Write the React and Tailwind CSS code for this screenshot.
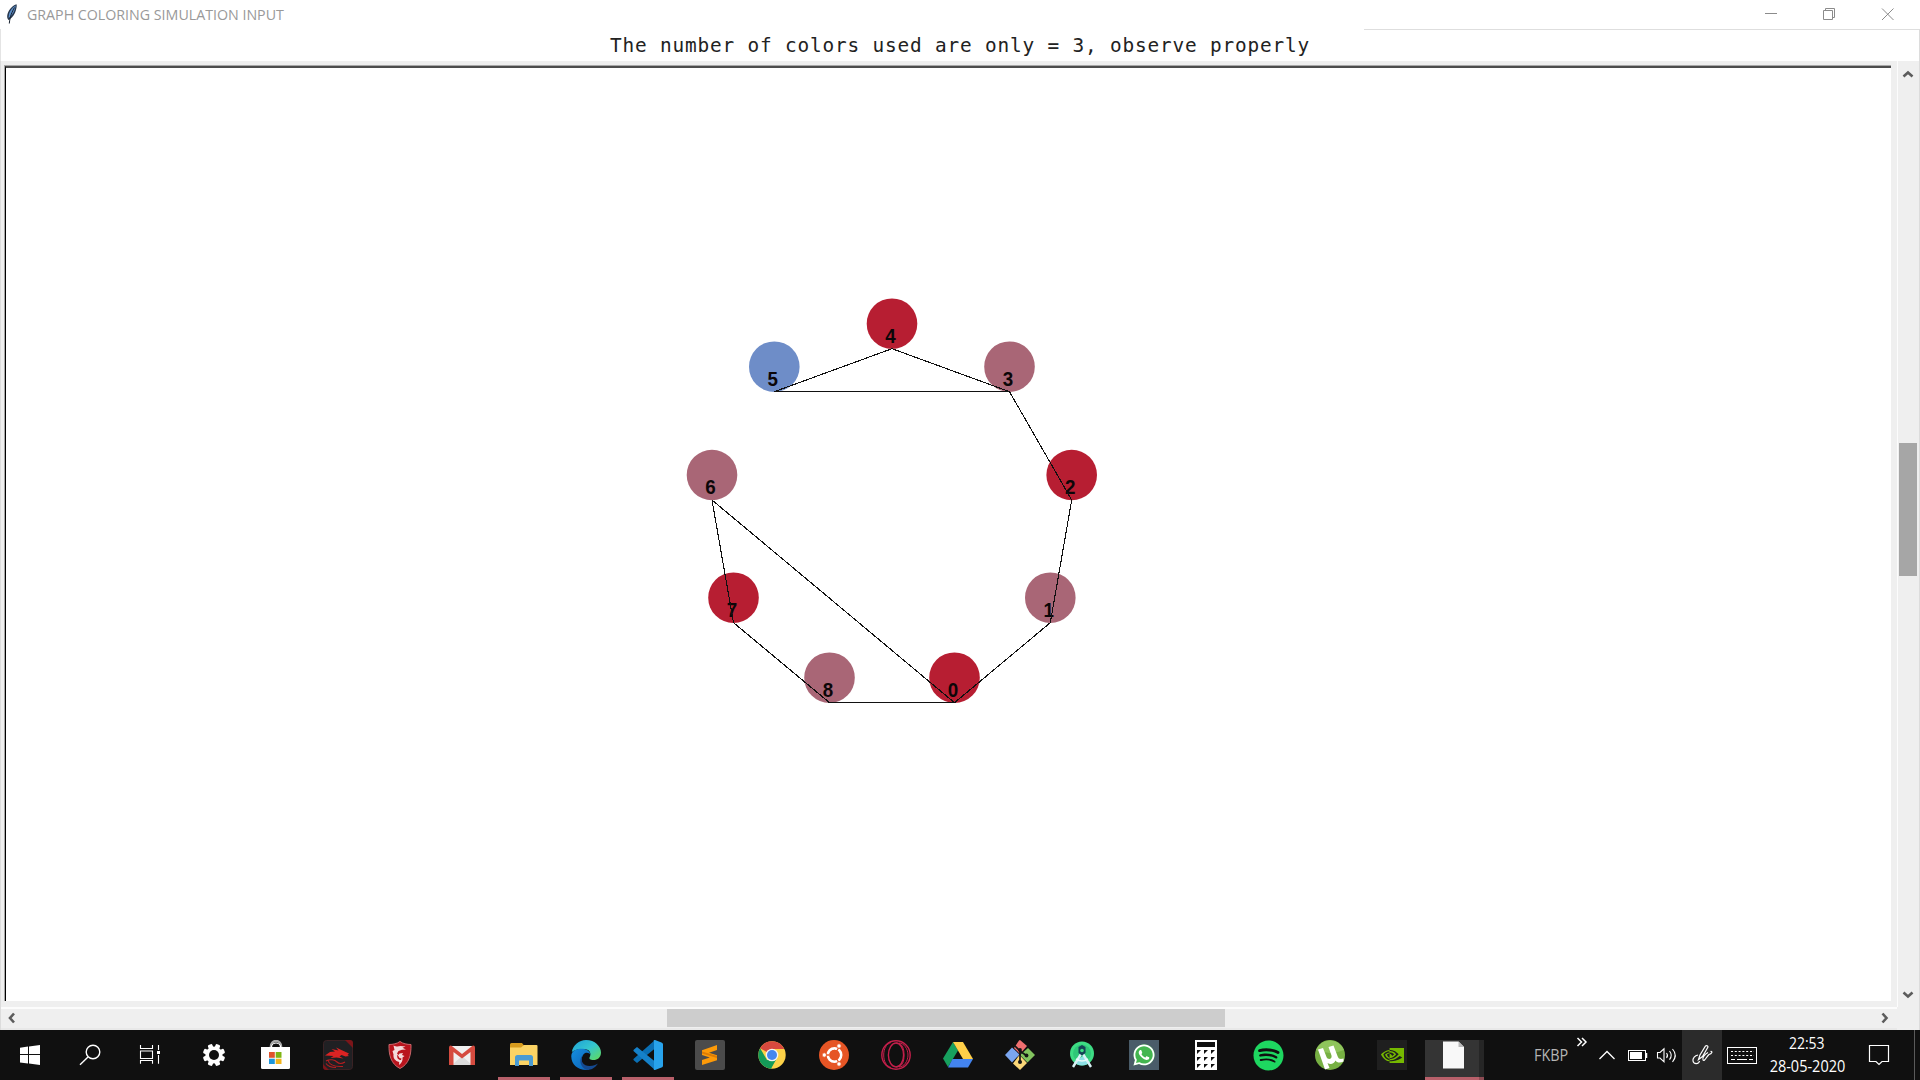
import React from "react";
import { FaSpotify, FaWhatsapp } from "react-icons/fa";
import { SiNvidia } from "react-icons/si";

const RED = "#b71e32";
const MAUVE = "#a96676";
const BLUE = "#6e8dc8";

const nodes = [
  { id: 0, x: 954.5, y: 677.7, fill: RED },
  { id: 1, x: 1050.3, y: 597.7, fill: MAUVE },
  { id: 2, x: 1071.7, y: 475, fill: RED },
  { id: 3, x: 1009.5, y: 366.7, fill: MAUVE },
  { id: 4, x: 892, y: 323.7, fill: RED },
  { id: 5, x: 774.3, y: 366.7, fill: BLUE },
  { id: 6, x: 712, y: 475, fill: MAUVE },
  { id: 7, x: 733.5, y: 597.7, fill: RED },
  { id: 8, x: 829.5, y: 677.7, fill: MAUVE },
];

const edges = [
  [0, 1], [1, 2], [2, 3], [3, 4], [4, 5], [5, 3], [6, 7], [7, 8], [8, 0], [6, 0],
];

function Graph() {
  return (
    <svg className="block h-full w-full" viewBox="6 68 1885 933">
      {nodes.map((n) => (
        <circle key={n.id} cx={n.x} cy={n.y} r="25.3" fill={n.fill} />
      ))}
      {nodes.map((n) => (
        <text key={n.id} transform={`translate(${n.x - 1.5} ${n.y + 18.8}) scale(0.94 1)`} textAnchor="middle" fill="#0c0608"
          className="font-['Liberation_Sans',Arial,sans-serif] text-[20px] font-bold">{n.id}</text>
      ))}
      {edges.map(([a, b]) => (
        <line key={`${a}-${b}`} x1={nodes[a].x} y1={nodes[a].y + 25} x2={nodes[b].x} y2={nodes[b].y + 25}
          stroke="#111" strokeWidth="1.1" shapeRendering="crispEdges" />
      ))}
    </svg>
  );
}

function Chevron({ d }) {
  return (
    <svg className="block h-[12px] w-[12px]" viewBox="0 0 12 12" fill="none" stroke="#5c5c5c" strokeWidth="2.6">
      <path d={d} />
    </svg>
  );
}

function Icon({ children }) {
  return <svg className="block h-[30px] w-[30px] shrink-0" viewBox="0 0 30 30" fill="none">{children}</svg>;
}

const Windows = () => (
  <Icon>
    <path fill="#fff" d="M5 7.8 13 6.6V14H5zM14 6.4 25 5V14H14zM5 15h8v8.4L5 22.4zM14 15h11v10l-11-1.5z" />
  </Icon>
);
const Search = () => (
  <Icon>
    <circle cx="18" cy="12" r="6.8" stroke="#fff" strokeWidth="1.4" />
    <path d="M13 17 5 24.7" stroke="#fff" strokeWidth="1.4" />
  </Icon>
);
const TaskView = () => (
  <Icon>
    <path d="M5.5 5v3.5h12V5M5.500 23.800v-3.300h12v3.300M5.500 11h12v7.500h-12zM23.500 5v5M23.500 15v8.800" stroke="#fff" strokeWidth="1.100" />
    <rect x="22" y="11" width="3" height="3" fill="#fff" />
  </Icon>
);
const Settings = () => (
  <Icon>
    {[0, 45, 90, 135].map((a) => (
      <rect key={a} x="12.600" y="3.800" width="4.800" height="22.400" rx="1.300" fill="#fff" transform={`rotate(${a + 22.5} 15 15)`} />
    ))}
    <circle cx="15" cy="15" r="8.600" fill="#fff" />
    <circle cx="15" cy="15" r="5" fill="#101010" />
  </Icon>
);
const Store = () => (
  <Icon>
    <path d="M10 8V6.500a5 5.500 0 0 1 10 0V8" stroke="#aaa" strokeWidth="2.600" />
    <path d="M10.500 8V5.800a5 5 0 0 1 9 0V8" stroke="#fff" strokeWidth="1" />
    <path d="M0 7h29v20.500a1.500 1.500 0 0 1-1.500 1.500h-26A1.500 1.500 0 0 1 0 27.500z" fill="#fff" />
    <path d="M8 12h5.800v5.800H8z" fill="#e0532c" />
    <path d="M14.700 12h5.800v5.800h-5.800z" fill="#7fb514" />
    <path d="M8 18.700h5.800V24H8z" fill="#1c96dc" />
    <path d="M14.700 18.700h5.800V24h-5.800z" fill="#f2b51d" />
  </Icon>
);
const Dragon = () => (
  <Icon>
    <rect x=".5" y=".5" width="29" height="29" rx="3" fill="#202023" stroke="#3a2224" />
    <path d="M22 0h5a3 3 0 0 1 3 3v5zM0 24v3a3 3 0 0 0 3 3h3z" fill="#7c1519" />
    <path d="M2 15.500 7 12l5-.5L8.500 9l7 1.500L13 7.500l6.500 3 6.500 3-1.500 1.500 1.500 1-3.500.5-4-1.500-2 1.500 4 2-7-1-6 .5 3-2z" fill="#db2323" />
    <path d="M3 21c4-2.500 9-1 11 1s4 2.500 8 0M5 20c1 5 6 7 15 6.500M3 23.500c2 3 6 4 10 4" stroke="#b81d20" strokeWidth="1.100" />
  </Icon>
);
const Shield = () => (
  <Icon>
    <path d="M15 1.500c3 2.200 7 3 11 3C26.300 15 24 24 15 28.500 6 24 3.700 15 4 4.500c4 0 8-.8 11-3z" fill="#b9141d" stroke="#c9686c" strokeWidth="1" />
    <path d="M8.500 5.500c3 1.500 5 1 7 .5l5 .5-3 1.200 3.500 1.800-4 .2-3.500 1.300-1.500 2.500 1.500 1.500 1-1.500 3.500-.5-1 2 2.500 1-2 1.500c.5 3-1 5.500-3.500 7.500l.2-3c-4.200-1-6.200-4-5.700-7.500L7.500 11l2-1z" fill="#f3dadb" />
    <path d="M12.500 14.500c-1 3 .5 5.500 3.500 5.500l.5-1.500-2-.5z" fill="#b9141d" />
  </Icon>
);
const Gmail = () => (
  <Icon>
    <path d="M5 6h20v19H5z" fill="#f0f0f0" />
    <path d="m15 16 10 9H5z" fill="#dcdcdc" />
    <path d="M2 25V7.500a2 2 0 0 1 2.500-1.800L15 14l10.500-8.300A2 2 0 0 1 28 7.500V25h-4.500V12L15 18.500 6.500 12v13z" fill="#d54b3f" />
  </Icon>
);
const Explorer = () => (
  <Icon>
    <path d="M1 4.500A1.500 1.500 0 0 1 2.500 3H13l2 2.500V10H1z" fill="#d79b1d" />
    <path d="M1 7.500h11L15 5h12.500a1 1 0 0 1 1 1v19h-27.500z" fill="#fbd364" />
    <path d="M6 26V17.500A2.500 2.500 0 0 1 8.500 15h13a2.500 2.500 0 0 1 2.500 2.500V26h-4v-5.500H10V26z" fill="#4a9bd3" />
  </Icon>
);
const Edge = () => (
  <Icon>
    <defs>
      <linearGradient id="edgeTop" x1="0" y1="0" x2="1" y2="1">
        <stop offset="0" stopColor="#1e9fd8" /><stop offset=".5" stopColor="#34c6cf" /><stop offset="1" stopColor="#63dc56" />
      </linearGradient>
      <linearGradient id="edgeLow" x1="0" y1="0" x2="1" y2="1">
        <stop offset="0" stopColor="#1590e0" /><stop offset="1" stopColor="#0c5fb4" />
      </linearGradient>
    </defs>
    <path d="M.8 12C2 5 8 0 15 0c9 0 15 6.500 15 12.500 0 5-3.500 7.500-7.500 7.500-3.500 0-4.500-1.200-4-2.500 2-3 1-8-5-8.500C7 8.500 3 10 .8 12z" fill="url(#edgeTop)" />
    <path d="M.3 16C.5 11 5 8.700 10.500 8.700c5 0 9 2.500 9 6.500 0-2-5-4-7.500-.2-3 5-1 12 6 14.700C8 31 0 25 .3 16z" fill="url(#edgeLow)" />
    <path d="M11.500 15.500c-2.500 6 1 10.500 7 10.500 4 0 6-1.300 8.500-2.500C24 28 20 30 16 30 8.500 27 8 19 11.500 15.500z" fill="#154a91" />
  </Icon>
);
const Code = () => (
  <Icon>
    <path d="M22 0v8.500L4 23 1 20.500a1.300 1.300 0 0 1 0-2z" fill="#0a6fb4" />
    <path d="M4 7 22 21.500V30L1 11.500a1.300 1.300 0 0 1 0-2z" fill="#1581c9" />
    <path d="m22 0 6.500 2.500A2 2 0 0 1 30 4.500v21a2 2 0 0 1-1.500 2L22 30c-1 0-2-1-1-1.500V1.500C20 1 21 0 22 0z" fill="#28a3ec" />
  </Icon>
);
const Sublime = () => (
  <Icon>
    <rect width="30" height="30" rx="2" fill="#4b4b4b" />
    <path d="M7 10.200 22 5v5l-8 2.800 8 2.400v5L7 25v-5l7.800-2.600L7 15z" fill="#fd9a08" />
    <path d="m7 11.500 15 4.500v2L7 13.500z" fill="#dd7c04" />
  </Icon>
);
const Chrome = () => (
  <Icon>
    <circle cx="15" cy="15" r="13.700" fill="#fdd248" />
    <path d="M15 15 3.100 8.200A13.700 13.700 0 0 1 26.900 8.200L27 9H15z" fill="#d8493e" />
    <path d="M3.100 8.200 10 20l5 1-1 7.700A13.700 13.700 0 0 1 3.100 8.200z" fill="#149b58" />
    <path d="M14 28.700 20 18l-6 3-4-1z" fill="#149b58" />
    <circle cx="15" cy="15" r="6.300" fill="#f4f4f4" />
    <circle cx="15" cy="15" r="5" fill="#4687ee" />
  </Icon>
);
const Ubuntu = () => (
  <Icon>
    <circle cx="15" cy="15" r="15" fill="#e65525" />
    <circle cx="15.500" cy="15" r="6.600" stroke="#fff" strokeWidth="2.800" />
    <g stroke="#e65525" strokeWidth="1.300">
      <path d="M1 15h9M15.500 15l6.500 11.500M15.500 15 22 3.500" />
    </g>
    <circle cx="15.500" cy="15" r="5.200" fill="#e65525" />
    {[[5.300, 15], [20, 6], [20, 24]].map(([x, y]) => (
      <circle key={y} cx={x} cy={y} r="2.200" fill="#fff" stroke="#e65525" strokeWidth=".8" />
    ))}
  </Icon>
);
const Opera = () => (
  <Icon>
    <g stroke="#c51f4b">
      <circle cx="15" cy="15" r="14.200" strokeWidth="1.400" />
      <ellipse cx="15" cy="15" rx="7.600" ry="12" strokeWidth="1.400" />
      <path d="M10 2.500C5 4 2.700 9 2.700 15S5 26 10 27.500M15 3c7 0 8 6 8 12s-1 12-8 12M18 3c5 0 9 6 9 12s-4 12-9 12" strokeWidth="1" />
    </g>
  </Icon>
);
const Drive = () => (
  <Icon>
    <path d="M10 2 15 10.500 5 27 0 18.500z" fill="#17a05e" />
    <path d="M10 2h10l10 17H20z" fill="#ffcf48" />
    <path d="M9.500 19H30l-5 8.500H5z" fill="#4384f0" />
  </Icon>
);
const Git = () => (
  <Icon>
    <path d="m14 0.500 1-.5 7 6-7 8-6-6z" fill="#ef6f6f" />
    <path d="m7 7.500 7.500 7L7 22.500 0 15z" fill="#7ba6f0" />
    <path d="m23 8 7 7-7.500 7.500L15 15z" fill="#82c35e" />
    <path d="m14.500 15 7.500 8-7 7-7-6.500z" fill="#fbd778" />
    <path d="M9 5l6 6v12M15 11l7 5" stroke="#151515" strokeWidth="1.700" />
    <circle cx="15" cy="22" r="2" fill="#151515" />
    <circle cx="21.500" cy="15.500" r="1.900" fill="#151515" />
    <circle cx="15" cy="10" r="1.900" fill="#151515" />
  </Icon>
);
const AndroidStudio = () => (
  <Icon>
    <circle cx="15" cy="13.500" r="12" fill="#3ddc84" />
    <circle cx="15" cy="13.500" r="9" fill="#2fc778" />
    <path d="M7 22a11 11 0 0 0 16 0l-7-6z" fill="#8de0e6" />
    <path d="M14 14 6 27M16 14l8 13" stroke="#d9f1f5" strokeWidth="2.400" />
    <path d="M9 19q6 4 12 0" stroke="#e8fafa" strokeWidth="1.600" />
    <path d="m15 5 3.500 2v6L15 15.500 11.500 13V7z" fill="#154356" />
    <circle cx="15" cy="10.500" r="1.800" fill="#3ddc84" />
  </Icon>
);
const WhatsApp = () => (
  <div className="relative flex h-[30px] w-[30px] items-center justify-center bg-[#4a5c69]">
    <Icon>
      <path d="M4.500 25.500 6 20a10.500 10.500 0 1 1 4 4z" fill="#43b64f" />
    </Icon>
    <FaWhatsapp className="absolute left-[3px] top-[3px] h-[24px] w-[24px] text-white" />
  </div>
);
const Calculator = () => (
  <Icon>
    <rect x="4" width="22" height="30" fill="#fff" />
    <rect x="6" y="2" width="18" height="5" fill="#101010" />
    {[10, 17, 24].map((y) => [6, 13, 20].map((x) => (
      <path key={`${x}-${y}`} d={`M${x} ${y}h4l-4 4z`} fill="#101010" />
    )))}
  </Icon>
);
const Spotify = () => <FaSpotify className="h-[31px] w-[31px] text-[#1ed760]" />;
const Torrent = () => (
  <Icon>
    <circle cx="15" cy="15" r="15" fill="#77b043" />
    <path d="M1 10A15 15 0 0 1 29 10Q16 16 1 10z" fill="#8fc45c" />
    <path d="M3 9.500 8 8l3.500 9c1.500 3.500 6 2 5-1.500l-3-8.500 5-1.500 4.200 11c.8 2.500 2.800 3 5.800 2v3c-3 1.500-6.500 1.500-8-1-1.500 3.500-5 4.500-8 2.500l2 5-4.500 1.500z" fill="#fff" />
  </Icon>
);
const Nvidia = () => (
  <div className="flex h-[30px] w-[30px] items-center justify-center bg-[#1f1f1f]">
    <SiNvidia className="h-[23px] w-[23px] text-[#76b900]" />
  </div>
);
const Document = () => (
  <Icon>
    <path d="M5 1.500h15.500L26 7v21.500H5z" fill="#f8f8f8" />
    <path d="M20.500 1.500 26 7h-5.500z" fill="#b9b9b9" />
  </Icon>
);

const apps = [
  { name: "Settings", Glyph: Settings },
  { name: "Store", Glyph: Store },
  { name: "Dragon Center", Glyph: Dragon },
  { name: "Shield", Glyph: Shield },
  { name: "Gmail", Glyph: Gmail },
  { name: "Explorer", Glyph: Explorer, open: true },
  { name: "Edge", Glyph: Edge, open: true },
  { name: "Code", Glyph: Code, open: true },
  { name: "Sublime", Glyph: Sublime },
  { name: "Chrome", Glyph: Chrome },
  { name: "Ubuntu", Glyph: Ubuntu },
  { name: "Opera", Glyph: Opera },
  { name: "Drive", Glyph: Drive },
  { name: "Git", Glyph: Git },
  { name: "Android Studio", Glyph: AndroidStudio },
  { name: "WhatsApp", Glyph: WhatsApp },
  { name: "Calculator", Glyph: Calculator },
  { name: "Spotify", Glyph: Spotify },
  { name: "Torrent", Glyph: Torrent },
  { name: "Nvidia", Glyph: Nvidia },
];

function TitleBar() {
  return (
    <header className="flex h-[29px] items-start bg-white pl-[6px]">
      <svg className="mt-[4px] h-[20px] w-[12px] shrink-0" viewBox="0 0 12 20">
        <path d="M10.500.3C7 1.500 3 5 1.500 10c-.6 2.500-.5 4 .8 6l1.200-.5C7 13 9 10 10 6c.5-2.200 1-4 .5-5.700z" fill="#26364c" />
        <path d="M9.800 1.500C6.500 3 4 6.500 3 10l-.5 4C6.500 12 9 6 9.800 1.500z" fill="#5d8fc9" />
        <path d="M8.500 3.500C6 8 4 12 3.300 19.500" stroke="#15202e" strokeWidth="1" fill="none" />
      </svg>
      <h1 className="ml-[9px] origin-left scale-x-[0.948] whitespace-nowrap font-['Open_Sans','Noto_Sans',sans-serif] text-[15px] leading-[28px] text-[#999]">
        GRAPH COLORING SIMULATION INPUT
      </h1>
      <svg className="ml-auto h-[29px] w-[160px] shrink-0" viewBox="1760 0 160 29" fill="none" stroke="#8b8b8b">
        <path d="M1765 13.500h12" />
        <path d="M1823.500 10.500h9v9h-9zM1825.500 10.500v-2h9v9h-2" />
        <path d="m1882 8.500 11.500 11.500M1893.500 8.500 1882 20" />
      </svg>
    </header>
  );
}

function Taskbar() {
  return (
    <footer className="flex h-[50px] bg-[#101010] font-['Open_Sans','Noto_Sans',sans-serif] text-white">
      {[Windows, Search, TaskView].map((Glyph, i) => (
        <div key={i} className="flex w-[60px] items-center justify-center"><Glyph /></div>
      ))}
      <div className="ml-[3px] flex">
        {apps.map(({ name, Glyph, open }) => (
          <div key={name} className="flex w-[62px] flex-col items-center pt-[10px]">
            <div className="flex h-[30px] items-center"><Glyph /></div>
            {open && <div className="mt-[7px] h-[3px] w-[52px] bg-[#b8606a]" />}
          </div>
        ))}
      </div>
      <div className="ml-[2px] mt-[10px] flex h-[40px]">
        <div className="flex w-[54px] flex-col items-center bg-[#343434]">
          <div className="ml-[2px]"><Document /></div>
          <div className="mt-[7px] h-[3px] w-full bg-[#b8606a]" />
        </div>
        <div className="flex w-[5px] flex-col justify-end bg-[#262626]">
          <div className="h-[3px] bg-[#8e4c54]" />
        </div>
      </div>

      <div className="ml-auto flex">
        <div className="flex w-[40px] items-center">
          <span className="origin-left scale-x-[0.9] text-[16px] leading-none text-[#b5b5b5]">FKBP</span>
        </div>
        <svg className="h-[50px] w-[20px]" viewBox="0 0 20 50" fill="none" stroke="#fff" strokeWidth="1.500">
          <path d="m3.500 8 4 4-4 4M8 8l4 4-4 4" />
        </svg>
        <svg className="h-[50px] w-[26px]" viewBox="0 0 26 50" fill="none" stroke="#fff" strokeWidth="1.300">
          <path d="m5.500 29 7.500-7.500 7.500 7.500" />
        </svg>
        <svg className="h-[50px] w-[34px]" viewBox="0 0 34 50" fill="none" stroke="#fff">
          <rect x="8.500" y="20.500" width="17" height="10" />
          <rect x="10" y="22" width="12" height="7" fill="#fff" stroke="none" />
          <path d="M26.500 23v5" strokeWidth="1.500" />
        </svg>
        <svg className="h-[50px] w-[28px]" viewBox="0 0 28 50" fill="none" stroke="#fff" strokeWidth="1.100">
          <path d="M3.500 22.500h2.500l4-3.700v13l-4-3.800H3.500zM12.500 23q2 2.400 0 4.800M15.500 21q3.500 4.300 0 8.700M18.500 19q5.500 6.300 0 13" />
        </svg>
        <div className="flex w-[40px] items-center justify-center bg-[#2b2b2b]">
          <svg className="h-[22px] w-[22px]" viewBox="0 0 22 22" fill="none" stroke="#fff" strokeWidth="1.200">
            <path d="m7.500 15.500 1.500-4.500 5.500-9q2-1 2.500 1L11.500 12.500zM7 11c-3 .5-5.500 3-5 6 .5 3.500 6 3.500 6.500 0M17 8.500c-3.500 2-6 5.500-5 7.500 1.500 2 3.500-3.500 6-5.500 3-1 4-3.500 1.500-3" />
          </svg>
        </div>
        <svg className="h-[50px] w-[40px]" viewBox="0 0 40 50" fill="none" stroke="#fff">
          <rect x="5.500" y="17.500" width="29" height="16" />
          <path d="M9 21.500h23M9 25.500h23" strokeDasharray="2 1.800" />
          <path d="M9 29.500h4M15 29.500h10M27 29.500h4" />
        </svg>
        <div className="flex w-[92px] flex-col items-center pr-[2px] text-[15.500px] leading-[23px]">
          <span className="mt-[2px] scale-x-[0.9] whitespace-nowrap">22:53</span>
          <span className="scale-x-[0.935] whitespace-nowrap">28-05-2020</span>
        </div>
        <svg className="h-[50px] w-[50px]" viewBox="0 0 50 50" fill="none" stroke="#fff" strokeWidth="1.200">
          <path d="M15.500 15.500h19v16h-6.500l-3 3-3-3h-6.500z" />
        </svg>
        <div className="ml-[10px] mr-[5px] w-px bg-[#5a5a5a]" />
      </div>
    </footer>
  );
}

export default function App() {
  return (
    <div className="flex h-[1080px] w-[1920px] flex-col overflow-hidden bg-white">
      <TitleBar />
      <section className="flex h-[32px] flex-col border-l border-l-[#e4e4e4] border-r border-r-[#dcdcdc] bg-white">
        <div className="ml-[1363px] h-px shrink-0 bg-[#dedede]" />
        <p className="mt-px ml-[609px] whitespace-pre font-['DejaVu_Sans_Mono',monospace] text-[19.400px] leading-[30px] tracking-[0.825px] text-[#222]">
          The number of colors used are only = 3, observe properly
        </p>
      </section>
      <main className="flex h-[969px] border-l border-l-[#dcdcdc] border-r border-r-[#dcdcdc] bg-[#efefef]">
        <div className="flex w-[1896px] flex-col">
          <div className="ml-[3px] mt-[4px] h-[936px] w-[1887px] border-l border-t border-[#a8a8a8]">
            <div className="h-[935px] w-[1886px] border-l border-t-2 border-l-black border-t-[#4d4d4d] bg-white">
              <Graph />
            </div>
          </div>
          <div className="mt-[6px] h-[2px] bg-[#fcfcfc]" />
          <div className="flex h-[19px] items-start">
            <div className="ml-[4px] mt-[3px]"><Chevron d="M9 1.500 5 6l4 4.500" /></div>
            <div className="ml-[650px] h-[18px] w-[558px] bg-[#cdcdcd]" />
            <div className="ml-auto mr-[6px] mt-[3px]"><Chevron d="M3.500 1.500 7.500 6l-4 4.500" /></div>
          </div>
          <div className="h-[2px] bg-[#e8e8e8]" />
        </div>
        <div className="h-[946px] w-px bg-[#fcfcfc]" />
        <div className="flex w-[20px] flex-col items-center">
          <div className="mt-[7px]"><Chevron d="M1.500 8.500 6 4.500l4.500 4" /></div>
          <div className="mt-[363px] h-[133px] w-[18px] bg-[#a6a6a6]" />
          <div className="mt-[413px]"><Chevron d="M1.500 3.500 6 7.500l4.500-4" /></div>
        </div>
      </main>
      <Taskbar />
    </div>
  );
}
